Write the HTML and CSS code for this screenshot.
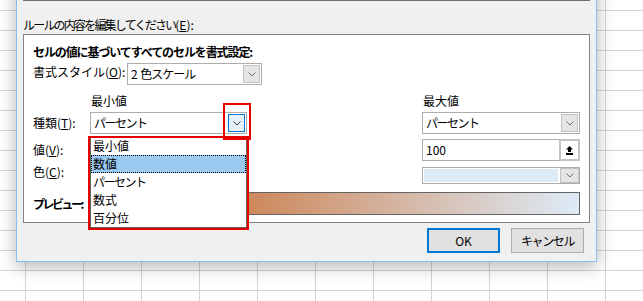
FILE: index.html
```html
<!DOCTYPE html>
<html lang="ja">
<head>
  <meta charset="UTF-8">
  <meta name="viewport" content="width=device-width, initial-scale=1">
  <title>書式ルールの編集</title>
  <link rel="stylesheet" href="styles.css">
</head>
<body>

  <div class="dialog">
    <div class="rule-list"></div>
    <div class="edit-label"><span class="tighter">ルールの内容を編集してください</span>(<u>E</u>):</div>

    <div class="edit-box">
      <div class="title"><span class="bold-tight">セルの値に基づいてすべてのセルを書式設定</span>:</div>

      <div class="style-row">
        <span class="label">書式スタイル(<u>O</u>):</span>
        <div class="combo style-combo">
          <span class="value">2 <span class="narrow">色スケール</span></span>
          <span class="drop"><svg width="8" height="5" viewBox="0 0 8 5"><path d="M0.5 0.5 L4 4 L7.5 0.5" fill="none" stroke="#707070"/></svg></span>
        </div>
      </div>

      <div class="scale">
        <span class="head min-col">最小値</span>
        <span class="head max-col">最大値</span>

        <span class="label">種類(<u>T</u>):</span>
        <div class="combo min-col">
          <span class="value tight">パーセント</span>
          <span class="drop focus"><svg width="8" height="5" viewBox="0 0 8 5"><path d="M0.5 0.5 L4 4 L7.5 0.5" fill="none" stroke="#4a3a30"/></svg></span>
        </div>
        <div class="combo max-col">
          <span class="value tight">パーセント</span>
          <span class="drop"><svg width="8" height="5" viewBox="0 0 8 5"><path d="M0.5 0.5 L4 4 L7.5 0.5" fill="none" stroke="#707070"/></svg></span>
        </div>

        <span class="label">値(<u>V</u>):</span>
        <div class="field min-col"></div>
        <div class="field max-col">
          <span class="value">100</span>
          <span class="range-btn"><svg width="7" height="9" viewBox="0 0 7 9"><path d="M3.5 0 L7 3.5 L5 3.5 L5 6 L2 6 L2 3.5 L0 3.5 Z" fill="#000"/><rect x="0" y="7" width="7" height="2" fill="#000"/></svg></span>
        </div>

        <span class="label color-label">色(<u>C</u>):</span>
        <div class="color-field min-col">
          <span class="swatch swatch-min"></span>
          <span class="drop"><svg width="8" height="5" viewBox="0 0 8 5"><path d="M0.5 0.5 L4 4 L7.5 0.5" fill="none" stroke="#707070"/></svg></span>
        </div>
        <div class="color-field max-col">
          <span class="swatch"></span>
          <span class="drop"><svg width="8" height="5" viewBox="0 0 8 5"><path d="M0.5 0.5 L4 4 L7.5 0.5" fill="none" stroke="#707070"/></svg></span>
        </div>
      </div>

      <div class="preview-row">
        <span class="label"><span class="preview-kana">プレビュー</span>:</span>
        <div class="preview-bar"></div>
      </div>
    </div>

    <div class="buttons">
      <button class="btn default">OK</button>
      <button class="btn tight">キャンセル</button>
    </div>
  </div>

  <!-- open dropdown of 種類 (min) -->
  <ul class="drop-list">
    <li>最小値</li>
    <li class="selected">数値</li>
    <li class="tight">パーセント</li>
    <li>数式</li>
    <li>百分位</li>
  </ul>

  <div class="callout callout-button"></div>
  <div class="callout callout-list"></div>

</body>
</html>
```

FILE: styles.css
```css
body {
  margin: 0;
  width: 643px;
  height: 301px;
  overflow: hidden;
  position: relative;
  font-family: "Noto Sans CJK JP", sans-serif;
  font-size: 12px;
  color: #000;
  background-color: #fff;
  background-image:
    linear-gradient(to right, #d4d4d4 1px, transparent 1px),
    linear-gradient(to bottom, #d4d4d4 1px, transparent 1px);
  background-size: 58px 20px;
  background-position: 25px 0, 0 10px;
}

u {
  text-underline-offset: 1px;
}

/* kana in the dialog font run narrower than full width */
.tight {
  letter-spacing: -1.5px;
}

.tighter {
  letter-spacing: -1.8px;
}

.narrow {
  letter-spacing: -1px;
}

.dialog {
  position: absolute;
  left: 16px;
  top: -40px;
  width: 581px;
  box-sizing: border-box;
  padding: 0 6px 8px;
  background: #f0f0f0;
  border: 1px solid #88bff2;
  box-shadow: 0 4px 16px rgba(0,0,0,0.3);
}

.rule-list {
  height: 39px;
  background: #fff;
  border: 1px solid #707070;
  border-top: none;
}

.edit-label {
  padding: 16px 0 1px;
  line-height: 16px;
}

.edit-box {
  background: #fff;
  border: 1px solid #828282;
  padding: 9px 9px 7px;
}

.title {
  font-weight: bold;
  line-height: 16px;
}

.bold-tight {
  letter-spacing: -1.1px;
}

.style-row {
  display: flex;
  align-items: flex-start;
  margin-top: 3px;
}

.style-row .label {
  width: 94px;
  line-height: 18px;
}

.combo,
.field,
.color-field {
  display: flex;
  align-items: center;
  box-sizing: border-box;
  background: #fff;
  border: 1px solid #adadad;
}

.combo {
  height: 22px;
  padding: 1px;
}

.style-combo {
  width: 135px;
}

.value {
  flex: 1;
  padding-left: 2px;
  line-height: 18px;
  white-space: nowrap;
}

.drop {
  display: flex;
  align-items: center;
  justify-content: center;
  width: 17px;
  height: 18px;
  box-sizing: border-box;
  background: #e5e5e5;
  border: 1px solid #c2c2c2;
}

.drop.focus {
  background: #e5f1fb;
  border-color: #0078d7;
}

.scale {
  display: grid;
  grid-template-columns: 57px 157px 175px 158px;
  grid-template-rows: 19px 27px 28px 17px;
  align-items: start;
  margin-top: 8px;
}

.min-col {
  grid-column: 2;
}

.max-col {
  grid-column: 4;
}

.head {
  line-height: 16px;
  padding-left: 1px;
}

.scale .label {
  grid-column: 1;
  line-height: 22px;
}

.scale .color-label {
  margin-top: -6px;
}

.field {
  height: 22px;
}

.field .value {
  padding-left: 3px;
}

.range-btn {
  display: flex;
  align-items: center;
  justify-content: center;
  width: 21px;
  height: 22px;
  margin: -1px -1px -1px 0;
  box-sizing: border-box;
  background: #fff;
  border: 2px solid #c4c4c4;
}

.color-field {
  height: 17px;
}

.swatch {
  flex: 1;
  height: 13px;
  margin: 0 2px 0 1px;
  background: #ddebf7;
}

.swatch-min {
  background: #c65911;
}

.color-field .drop {
  width: 19px;
  height: 15px;
}

.preview-row {
  display: flex;
  align-items: center;
  height: 23px;
  margin-top: 8px;
}

.preview-row .label {
  width: 57px;
  flex-shrink: 0;
  font-weight: bold;
  white-space: nowrap;
}

.preview-kana {
  letter-spacing: -2.5px;
}

.preview-bar {
  flex: 1;
  height: 23px;
  box-sizing: border-box;
  border: 1px solid #646464;
  background: linear-gradient(to right, #c65911, #ddebf7);
}

.buttons {
  display: flex;
  justify-content: flex-end;
  gap: 11px;
  margin-top: 5px;
  padding-right: 6px;
}

.btn {
  width: 73px;
  height: 25px;
  padding: 0;
  box-sizing: border-box;
  font: inherit;
  color: #000;
  background: #e1e1e1;
  border: 1px solid #adadad;
}

.btn.tight {
  letter-spacing: -1.4px;
}

.btn.default {
  border: 2px solid #0078d7;
}

.drop-list {
  position: absolute;
  left: 90px;
  top: 136px;
  width: 157px;
  margin: 0;
  padding: 0;
  list-style: none;
  box-sizing: border-box;
  background: #fff;
  border: 1px solid #646464;
  box-shadow: 1px 1px 0 #9a9a9a;
}

.drop-list li {
  height: 18px;
  line-height: 18px;
  padding-left: 2px;
}

.drop-list li.selected {
  background: #99c9ef;
  outline: 1px dotted #000;
  outline-offset: -1px;
}

.callout {
  position: absolute;
  box-sizing: border-box;
  border: 2px solid #e60000;
}

.callout-button {
  left: 223px;
  top: 103px;
  width: 28px;
  height: 37px;
}

.callout-list {
  left: 88px;
  top: 136px;
  width: 161px;
  height: 94px;
}
```
